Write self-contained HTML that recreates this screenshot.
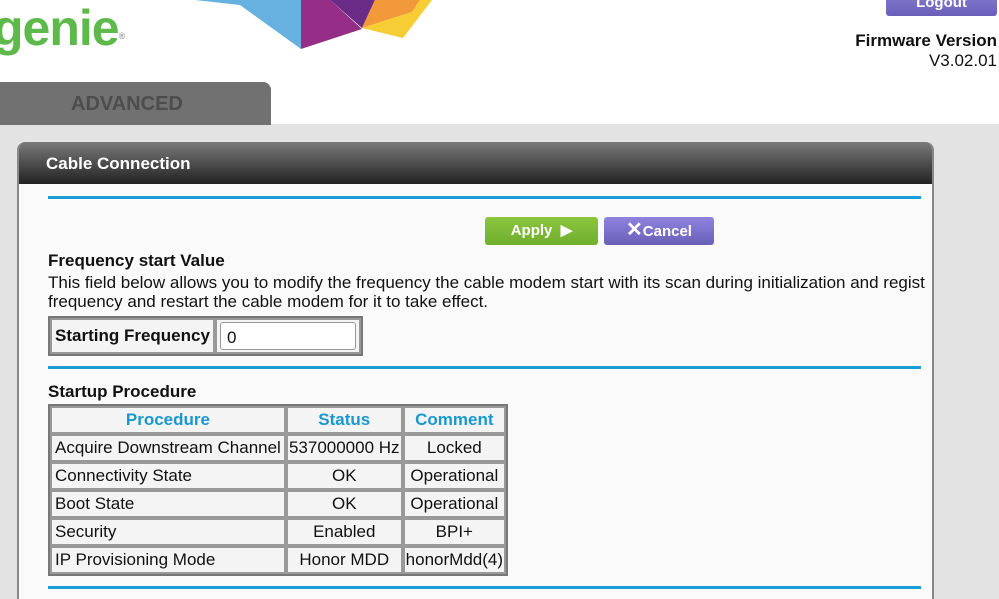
<!DOCTYPE html>
<html><head><meta charset="utf-8"><style>
*{margin:0;padding:0;box-sizing:border-box}
html,body{width:999px;height:599px;overflow:hidden}
body{background:#fff;font-family:"Liberation Sans",sans-serif;position:relative;color:#111}
.abs{position:absolute}
.bg{left:0;top:124px;width:999px;height:475px;background:#e3e3e3}
.tab{left:-10px;top:82px;width:281px;height:43px;background:#717171;border-radius:0 8px 0 0}
.tab span{position:absolute;left:81px;top:11px;font-weight:bold;font-size:20px;color:#4d4d4d}
.panel{left:17px;top:142px;width:917px;height:457px;background:#fafafa;border-left:2px solid #888;border-right:2px solid #888;border-radius:8px 8px 0 0;overflow:hidden}
.hdr{height:42px;background:linear-gradient(#7a7a7a,#222);color:#fff;font-weight:bold;font-size:17px;padding:12px 0 0 27px}
.line{left:48px;width:873px;height:3px;background:#1a9dd5}
.btn{height:28px;border-radius:3px;color:#fff;font-weight:bold;font-size:15px;text-align:center;line-height:27px}
table{border-collapse:separate;border:2px solid #777;border-spacing:0;position:absolute;font-size:17px;white-space:nowrap}
td{border:2px solid #999;padding:0 3px;height:28px;background:#f4f4f4;line-height:20px}
th{color:#1a98cf;font-size:17px;border:2px solid #999;height:28px;background:#f4f4f4}
.c{text-align:center}
</style></head><body>
<div class="abs" style="left:-7px;top:0;font-size:50px;font-weight:bold;color:#5cb94a;letter-spacing:-1px;line-height:56px">genie<sup style="font-size:9px;color:#999;vertical-align:top;position:relative;top:8px">®</sup></div>
<svg class="abs" style="left:0;top:0" width="999" height="60">
<polygon points="195,0 240,5 301,49 301,0" fill="#67b1e0"/>
<polygon points="301,0 301,49 362,29 330,0" fill="#962d86"/>
<polygon points="330,0 362,28 375,0" fill="#6a2c86"/>
<polygon points="375,0 362,28 412,12 420,0" fill="#f2993a"/>
<polygon points="362,28 403,38 432,0 420,0 412,12" fill="#f6cd34"/>
</svg>
<div class="abs btn" style="left:886px;top:-12px;width:111px;height:28px;background:linear-gradient(#8b80d6,#6a5fb8);line-height:30px">Logout</div>
<div class="abs" style="right:2px;top:31px;text-align:right;font-size:17px;line-height:20px"><b>Firmware Version</b><br>V3.02.01</div>
<div class="abs bg"></div>
<div class="abs tab"><span>ADVANCED</span></div>
<div class="abs panel"><div class="hdr">Cable Connection</div></div>
<div class="abs line" style="top:196px"></div>
<div class="abs btn" style="left:485px;top:217px;width:113px;background:linear-gradient(#8dc63f,#6fae2d)">Apply &nbsp;▶</div>
<div class="abs btn" style="left:604px;top:217px;width:110px;background:linear-gradient(#8e84e0,#6a5fb6)"><span style="font-size:20px">✕</span>Cancel</div>
<div class="abs" style="left:48px;top:251px;font-size:17px;line-height:20px;font-weight:bold">Frequency start Value</div>
<div class="abs" style="left:48px;top:273px;font-size:17px;line-height:19px;white-space:nowrap">This field below allows you to modify the frequency the cable modem start with its scan during initialization and regist<br>frequency and restart the cable modem for it to take effect.</div>
<table style="left:48px;top:316px;width:315px"><tr><td style="height:36px;width:165px"><b>Starting Frequency</b></td><td><div style="border:1px solid #999;border-radius:3px;height:28px;background:#fff;padding:5px 6px;font-size:17px">0</div></td></tr></table>
<div class="abs line" style="top:366px"></div>
<div class="abs" style="left:48px;top:382px;font-size:17px;font-weight:bold">Startup Procedure</div>
<table style="left:48px;top:404px;width:460px">
<tr><th style="width:235px">Procedure</th><th style="width:118px">Status</th><th>Comment</th></tr>
<tr><td>Acquire Downstream Channel</td><td class="c" style="padding:0 1px">537000000 Hz</td><td class="c">Locked</td></tr>
<tr><td>Connectivity State</td><td class="c">OK</td><td class="c">Operational</td></tr>
<tr><td>Boot State</td><td class="c">OK</td><td class="c">Operational</td></tr>
<tr><td>Security</td><td class="c">Enabled</td><td class="c">BPI+</td></tr>
<tr><td>IP Provisioning Mode</td><td class="c">Honor MDD</td><td class="c" style="padding:0 1px">honorMdd(4)</td></tr>
</table>
<div class="abs line" style="top:586px"></div>
</body></html>
